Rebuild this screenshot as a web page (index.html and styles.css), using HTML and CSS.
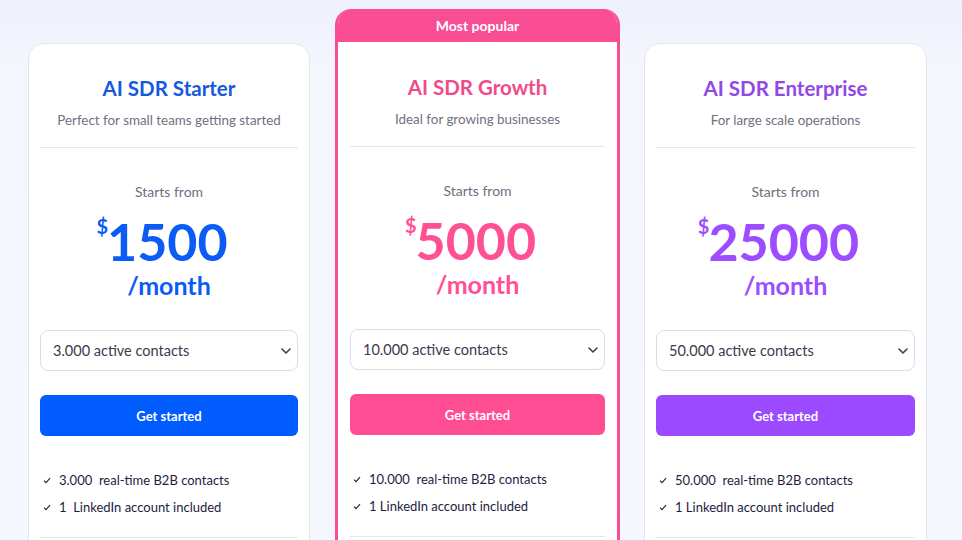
FILE: index.html
```html
<!DOCTYPE html>
<html lang="en">
<head>
<meta charset="utf-8">
<title>AI SDR Pricing</title>
<link rel="stylesheet" href="styles.css">
</head>
<body>
<main class="plans">
  <section class="card card-blue">
    <div class="card-body">
      <header class="head">
        <h2 class="title">AI SDR Starter</h2>
        <p class="sub">Perfect for small teams getting started</p>
      </header>
      <p class="starts">Starts from</p>
      <div class="price"><span class="cur">$</span>1500</div>
      <div class="per">/month</div>
      <div class="select"><span>3.000 active contacts</span>
        <svg class="chev" width="10" height="6" viewBox="0 0 10 6"><path d="M1 1l4 4 4-4" fill="none" stroke="#3d3d4d" stroke-width="1.6" stroke-linecap="round" stroke-linejoin="round"/></svg>
      </div>
      <button class="btn">Get started</button>
      <ul class="features">
        <li><svg class="check" width="8" height="7" viewBox="0 0 8 7"><path d="M1 3.6l2 2L7 1.2" fill="none" stroke="#1d1d3f" stroke-width="1.1"/></svg>3.000&nbsp; real-time B2B contacts</li>
        <li><svg class="check" width="8" height="7" viewBox="0 0 8 7"><path d="M1 3.6l2 2L7 1.2" fill="none" stroke="#1d1d3f" stroke-width="1.1"/></svg>1&nbsp; LinkedIn account included</li>
      </ul>
      <div class="rule"></div>
    </div>
  </section>

  <section class="card card-pink">
    <div class="badge">Most popular</div>
    <div class="card-body">
      <header class="head">
        <h2 class="title">AI SDR Growth</h2>
        <p class="sub">Ideal for growing businesses</p>
      </header>
      <p class="starts">Starts from</p>
      <div class="price"><span class="cur">$</span>5000</div>
      <div class="per">/month</div>
      <div class="select"><span>10.000 active contacts</span>
        <svg class="chev" width="10" height="6" viewBox="0 0 10 6"><path d="M1 1l4 4 4-4" fill="none" stroke="#3d3d4d" stroke-width="1.6" stroke-linecap="round" stroke-linejoin="round"/></svg>
      </div>
      <button class="btn">Get started</button>
      <ul class="features">
        <li><svg class="check" width="8" height="7" viewBox="0 0 8 7"><path d="M1 3.6l2 2L7 1.2" fill="none" stroke="#1d1d3f" stroke-width="1.1"/></svg>10.000&nbsp; real-time B2B contacts</li>
        <li><svg class="check" width="8" height="7" viewBox="0 0 8 7"><path d="M1 3.6l2 2L7 1.2" fill="none" stroke="#1d1d3f" stroke-width="1.1"/></svg>1 LinkedIn account included</li>
      </ul>
      <div class="rule"></div>
    </div>
  </section>

  <section class="card card-purple">
    <div class="card-body">
      <header class="head">
        <h2 class="title">AI SDR Enterprise</h2>
        <p class="sub">For large scale operations</p>
      </header>
      <p class="starts">Starts from</p>
      <div class="price"><span class="cur">$</span>25000</div>
      <div class="per">/month</div>
      <div class="select"><span>50.000 active contacts</span>
        <svg class="chev" width="10" height="6" viewBox="0 0 10 6"><path d="M1 1l4 4 4-4" fill="none" stroke="#3d3d4d" stroke-width="1.6" stroke-linecap="round" stroke-linejoin="round"/></svg>
      </div>
      <button class="btn">Get started</button>
      <ul class="features">
        <li><svg class="check" width="8" height="7" viewBox="0 0 8 7"><path d="M1 3.6l2 2L7 1.2" fill="none" stroke="#1d1d3f" stroke-width="1.1"/></svg>50.000&nbsp; real-time B2B contacts</li>
        <li><svg class="check" width="8" height="7" viewBox="0 0 8 7"><path d="M1 3.6l2 2L7 1.2" fill="none" stroke="#1d1d3f" stroke-width="1.1"/></svg>1 LinkedIn account included</li>
      </ul>
      <div class="rule"></div>
    </div>
  </section>
</main>
</body>
</html>
```

FILE: styles.css
```css
* { box-sizing: border-box; }
html, body { margin: 0; padding: 0; }
body {
  width: 962px;
  height: 540px;
  overflow: hidden;
  font-family: "Lato", "Noto Sans", sans-serif;
  background: linear-gradient(#eef0fa 0px, #f4f6fe 60px, #f5f7ff 100%);
  color: #1d1d3f;
}
.plans {
  display: flex;
  align-items: flex-start;
  padding: 9px 0 0 28px;
  gap: 25px;
  height: 540px;
  overflow: hidden;
}
.card {
  flex: none;
  background: #fff;
  border: 1px solid #e4e5ee;
  border-radius: 16px;
  margin-top: 34px;
  width: 282px;
  height: 560px;
  overflow: hidden;
}
.card-purple { width: 283px; margin-left: -1px; }
.card-pink {
  margin-top: 0;
  width: 285px;
  height: 600px;
  border: 3px solid #f94d94;
  border-top: 0;
}
.badge {
  height: 33px;
  background: #f94d94;
  color: #fff;
  font-size: 14px;
  font-weight: 700;
  text-align: center;
  line-height: 33px;
}
.card-body {
  padding: 0 11px;
}
.card-pink .card-body { padding: 1px 12px 0 12px; }
.head {
  text-align: center;
  padding-top: 32px;
  padding-bottom: 18px;
  border-bottom: 1px solid #e6e7ee;
}
.title {
  margin: 0;
  font-size: 20.5px;
  line-height: 24px;
  font-weight: 700;
}
.sub {
  margin: 11px 0 0;
  font-size: 13.4px;
  line-height: 18px;
  color: #72707f;
}
.starts {
  margin: 35px 0 0;
  text-align: center;
  font-size: 14px;
  line-height: 18px;
  color: #6f6e7e;
}
.price {
  margin-top: 12px;
  padding-right: 14px;
  text-align: center;
  font-size: 52px;
  line-height: 56px;
  font-weight: 700;
}
.cur {
  font-size: 20px;
  vertical-align: top;
  line-height: 26px;
  margin-right: -1px;
}
.per {
  margin-top: 2px;
  text-align: center;
  font-size: 25px;
  line-height: 28px;
  font-weight: 700;
}
.select {
  margin-top: 31px;
  height: 41px;
  border: 1px solid #dcdce8;
  border-radius: 8px;
  display: flex;
  align-items: center;
  justify-content: space-between;
  padding: 0 6px 0 12px;
  font-size: 14.5px;
  color: #3a3a4c;
}
.btn {
  display: block;
  width: 100%;
  margin-top: 24px;
  height: 41px;
  border: 0;
  border-radius: 6px;
  color: #fff;
  font-family: inherit;
  font-size: 13px;
  font-weight: 700;
}
.features {
  list-style: none;
  margin: 35px 0 0;
  padding: 0 0 0 3px;
  display: flex;
  flex-direction: column;
  gap: 9px;
}
.features li {
  display: flex;
  align-items: center;
  font-size: 13px;
  line-height: 18px;
  color: #1d1d3f;
}
.check { margin-right: 8px; flex: none; }
.rule {
  margin-top: 21px;
  border-top: 1px solid #e6e7ee;
}

.card-blue .title { color: #1559e0; }
.card-blue .price, .card-blue .per { color: #0b5cf5; }
.card-blue .btn { background: #005cff; }

.card-pink .title { color: #ef4b8a; }
.card-pink .price, .card-pink .per { color: #ff4f95; }
.card-pink .btn { background: #ff4d94; }

.card-purple .title { color: #9048e8; }
.card-purple .price, .card-purple .per { color: #9b4dff; }
.card-purple .btn { background: #9b4aff; }
```
